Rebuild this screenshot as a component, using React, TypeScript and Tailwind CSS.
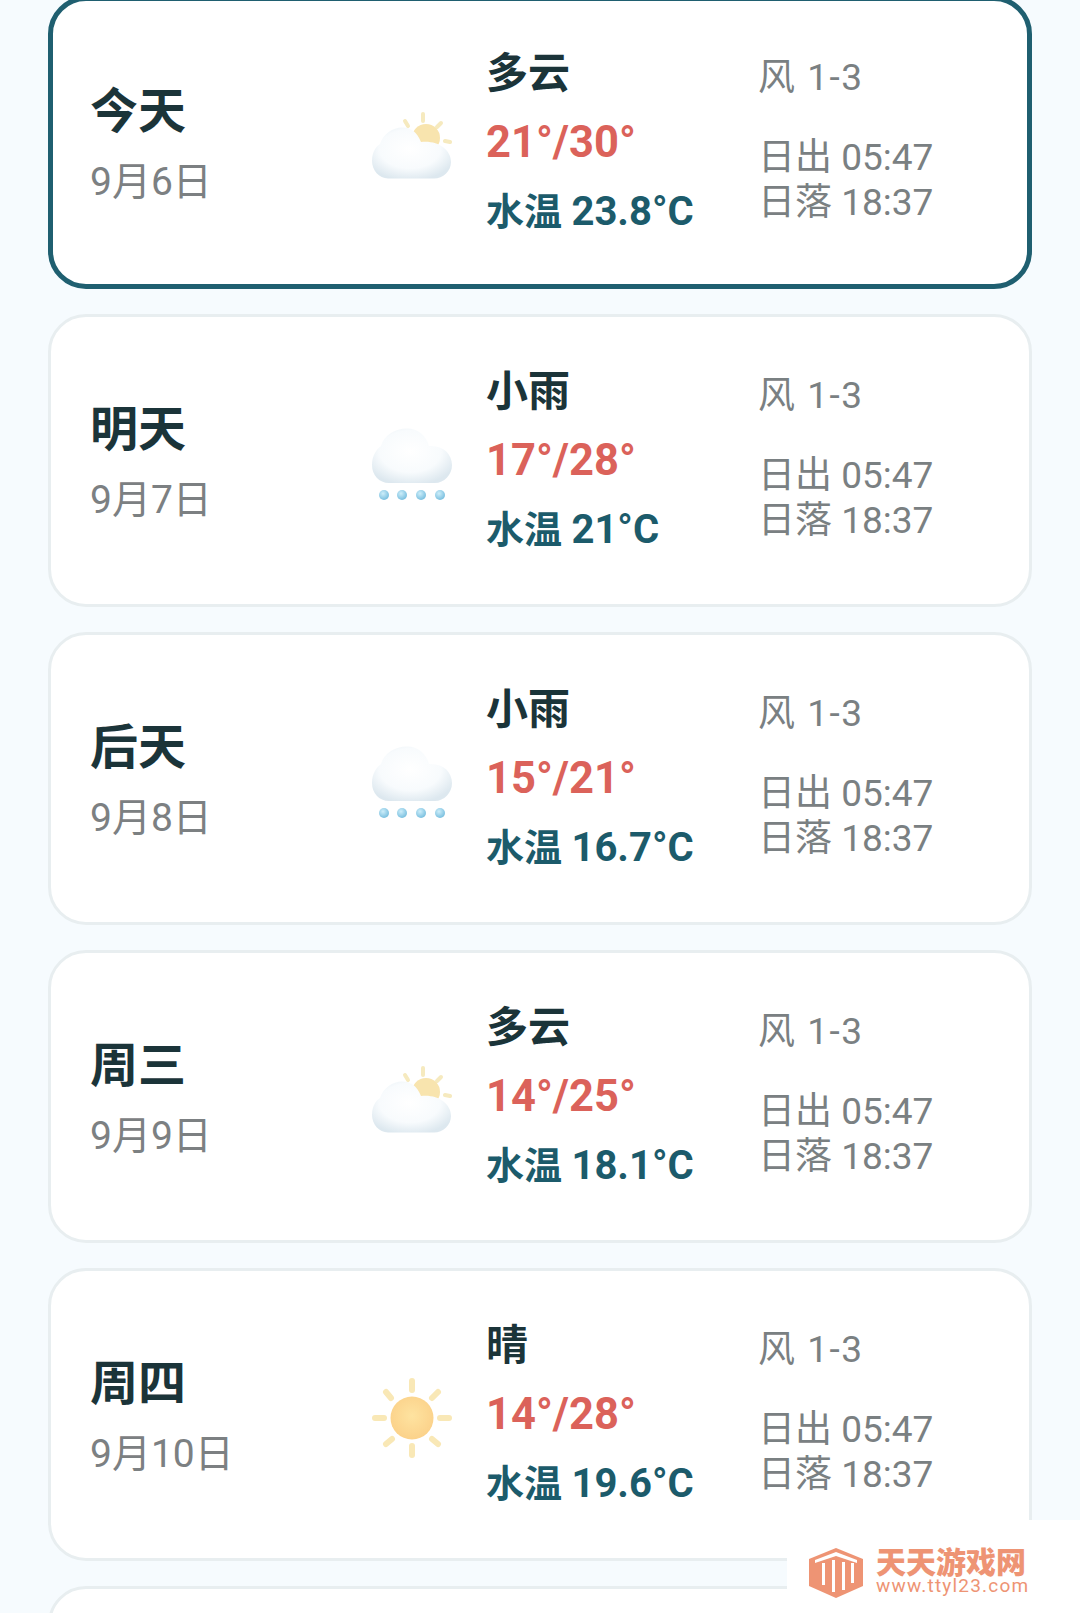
import React from "react";

const font = { fontFamily: 'Roboto, "Noto Sans CJK SC", sans-serif' };

function Defs() {
  return (
    <defs>
      <radialGradient id="cloudFill" cx="48%" cy="42%" r="62%">
        <stop offset="0%" stopColor="#ffffff" />
        <stop offset="62%" stopColor="#f8fbfd" />
        <stop offset="100%" stopColor="#dde8ef" />
      </radialGradient>
      <radialGradient id="sunFill" cx="50%" cy="45%" r="60%">
        <stop offset="0%" stopColor="#fee3a0" />
        <stop offset="100%" stopColor="#fbd088" />
      </radialGradient>
      <radialGradient id="dropFill" cx="40%" cy="35%" r="70%">
        <stop offset="0%" stopColor="#cdeefa" />
        <stop offset="100%" stopColor="#74bcdd" />
      </radialGradient>
    </defs>
  );
}

function Cloudy() {
  return (
    <svg viewBox="0 0 82 82" className="w-[82px] h-[82px] blur-[0.7px]">
      <Defs />
      <g stroke="#f6eabf" strokeWidth="4" strokeLinecap="round">
        <path d="M52 7V14" />
        <path d="M34 14L37 19" />
        <path d="M70 16L66 20" />
        <path d="M74 34L79 35" />
      </g>
      <circle cx="55" cy="31" r="14" fill="#f8e4ae" />
      <path
        d="M17 71.5C8 71.5 1 63 1 54C1 44 6 39 9 37C12 27 22 20.5 31 20.5C40 20.5 46 25 50 35C66 33 80 42 80 55C80 64 72 71.5 63 71.5Z"
        fill="url(#cloudFill)"
      />
    </svg>
  );
}

function Rain() {
  return (
    <svg viewBox="0 0 82 82" className="w-[82px] h-[82px] blur-[0.7px]">
      <Defs />
      <path
        d="M18 58C8 58 1 50 1 40C1 30 6 24 10 21C13 10 24 3.5 36 3.5C47 3.5 55 10 58 21C72 20 81 29 81 40C81 50 73 58 64 58Z"
        fill="url(#cloudFill)"
      />
      <circle cx="13" cy="70" r="5" fill="url(#dropFill)" />
      <circle cx="31" cy="70" r="5" fill="url(#dropFill)" />
      <circle cx="50" cy="70" r="5" fill="url(#dropFill)" />
      <circle cx="69" cy="70" r="5" fill="url(#dropFill)" />
    </svg>
  );
}

function Sun() {
  return (
    <svg viewBox="0 0 82 82" className="w-[82px] h-[82px] blur-[0.7px] -translate-y-[2px]">
      <Defs />
      <g stroke="#f9e8b6" strokeWidth="6" strokeLinecap="round">
        <path d="M41 4V13" />
        <path d="M41 69V78" />
        <path d="M4 41H13" />
        <path d="M69 41H78" />
        <path d="M15 15L20 21" />
        <path d="M67 15L61 21" />
        <path d="M15 67L21 62" />
        <path d="M67 67L61 62" />
      </g>
      <circle cx="41" cy="41" r="21.5" fill="url(#sunFill)" />
    </svg>
  );
}

type Day = { name: string; date: string; wx: string; temp: string; water: string; icon: "cloudy" | "rain" | "sun"; active?: boolean };

const days: Day[] = [
  { name: "今天", date: "9月6日", wx: "多云", temp: "21°/30°", water: "23.8°C", icon: "cloudy", active: true },
  { name: "明天", date: "9月7日", wx: "小雨", temp: "17°/28°", water: "21°C", icon: "rain" },
  { name: "后天", date: "9月8日", wx: "小雨", temp: "15°/21°", water: "16.7°C", icon: "rain" },
  { name: "周三", date: "9月9日", wx: "多云", temp: "14°/25°", water: "18.1°C", icon: "cloudy" },
  { name: "周四", date: "9月10日", wx: "晴", temp: "14°/28°", water: "19.6°C", icon: "sun" },
];

function Card({ d }: { d: Day }) {
  return (
    <div
      className={
        d.active
          ? "h-[293px] shrink-0 rounded-[38px] bg-white border-[5px] border-[#1f5f70] pl-[37px] grid grid-cols-[281px_115px_272px_1fr] items-center"
          : "h-[293px] shrink-0 rounded-[38px] bg-white border-[3px] border-[#e8eef0] pl-[39px] grid grid-cols-[281px_115px_272px_1fr] items-center"
      }
    >
      <div className="flex flex-col gap-[20px] pt-[2px]">
        <div className="text-[48px] leading-[56px] font-bold text-[#1b3439]">{d.name}</div>
        <div className="text-[39px] leading-[44px] text-[#7c8082] whitespace-nowrap">{d.date}</div>
      </div>
      <div className="flex items-center pt-[10px]">
        {d.icon === "cloudy" ? <Cloudy /> : d.icon === "rain" ? <Rain /> : <Sun />}
      </div>
      <div className="flex flex-col pt-[3px]">
        <div className="text-[42px] leading-[48px] font-bold text-[#1b3439] -translate-y-[1px]">{d.wx}</div>
        <div className="text-[43.5px] leading-[48px] font-bold text-[#db625a] mt-[20px]">{d.temp}</div>
        <div className="text-[38px] leading-[50px] font-bold text-[#1c5b6b] whitespace-nowrap mt-[20px]">
          水温 <span className="text-[40px]">{d.water}</span>
        </div>
      </div>
      <div className="flex flex-col pb-[4px] text-[37px] text-[#7a8082] whitespace-nowrap">
        <div className="leading-[44px] tracking-[1.5px]">风 1-3</div>
        <div className="leading-[45px] mt-[35px]">日出 05:47</div>
        <div className="leading-[45px]">日落 18:37</div>
      </div>
    </div>
  );
}

function Logo() {
  return (
    <svg viewBox="0 0 54 50" className="w-[54px] h-[50px]">
      <path d="M27 0L54 11V38L27 50L0 38V11Z" fill="#ee9474" />
      <g fill="#ffffff">
        <path d="M6 12L27 4L48 12V15L27 8L6 15Z" />
        <rect x="13" y="15" width="3" height="22" />
        <rect x="23" y="12" width="3" height="32" />
        <rect x="33" y="14" width="3" height="28" />
        <rect x="42" y="15" width="3" height="20" />
      </g>
    </svg>
  );
}

export default function App() {
  return (
    <div className="relative w-[1080px] h-[1613px] overflow-hidden bg-[#f6fbfe]" style={font}>
      <div className="flex flex-col gap-[25px] px-[48px] -mt-[4px]">
        {days.map((d) => (
          <Card key={d.name} d={d} />
        ))}
        <div className="h-[293px] shrink-0 rounded-[38px] bg-white border-[3px] border-[#e8eef0]" />
      </div>
      <div className="absolute left-[787px] top-[1520px] w-[293px] h-[93px] bg-white flex items-start gap-[13px] pl-[22px] pt-[28px]">
        <Logo />
        <div className="flex flex-col">
          <div className="text-[30px] leading-[29px] font-black text-[#ee9474] whitespace-nowrap">天天游戏网</div>
          <div className="text-[19px] leading-[18px] tracking-[1.2px] text-[#ee9474] whitespace-nowrap">www.ttyl23.com</div>
        </div>
      </div>
    </div>
  );
}
